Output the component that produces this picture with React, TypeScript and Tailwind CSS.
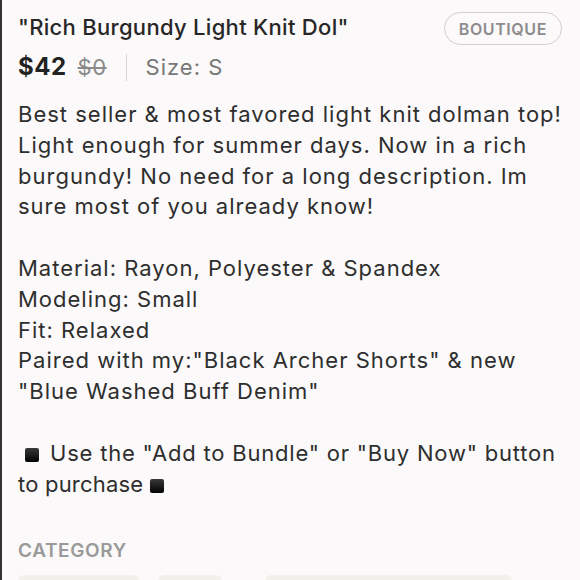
import React from 'react';

const font = { fontFamily: 'Inter, "Noto Sans", sans-serif' };

const Square = ({ className = '' }: { className?: string }) => (
  <span className={`inline-block w-[14px] h-[14px] rounded-[2px] bg-gradient-to-b from-[#3a3a3a] to-[#050505] align-[-1px] ${className}`} />
);

const App = () => {
  const intro = [
    'Best seller & most favored light knit dolman top!',
    'Light enough for summer days. Now in a rich',
    'burgundy! No need for a long description. Im',
    'sure most of you already know!',
  ];
  const details = [
    'Material: Rayon, Polyester & Spandex',
    'Modeling: Small',
    'Fit: Relaxed',
    'Paired with my:"Black Archer Shorts" & new',
    '"Blue Washed Buff Denim"',
  ];

  return (
    <div className="w-[580px] h-[580px] overflow-hidden bg-[#fbf9f9] border-l-2 border-[#333] text-[#2b2b2b]" style={font}>
      <div className="pl-[16px] pr-[18px] pt-[11px]">
        {/* Title row */}
        <div className="flex items-start justify-between">
          <h1 className="text-[22px] leading-[32px] font-medium tracking-[0.3px] text-[#272727]">"Rich Burgundy Light Knit Dol"</h1>
          <span className="mt-[1px] h-[33px] px-[14px] flex items-center rounded-full border border-[#cfcfcf] text-[16px] font-semibold tracking-[0.6px] text-[#8c8c8c]">
            BOUTIQUE
          </span>
        </div>

        {/* Price row */}
        <div className="flex items-center mt-[7px] h-[30px]">
          <span className="text-[24px] font-bold tracking-[0.5px] text-[#222]">$42</span>
          <span className="ml-[11px] text-[22px] tracking-[0.5px] text-[#8a8a8a] line-through">$0</span>
          <span className="mx-[19px] w-px h-[27px] bg-[#d5d5d5]" />
          <span className="text-[22px] tracking-[1px] text-[#777]">Size: S</span>
        </div>

        {/* Description */}
        <div className="mt-[17px] text-[22px] leading-[30.8px] tracking-[1px] text-[#2e2e2e] whitespace-nowrap">
          <p>
            {intro.map((d) => (
              <span key={d} className="block">{d}</span>
            ))}
          </p>
          <p className="mt-[30.8px]">
            {details.map((d) => (
              <span key={d} className="block">{d}</span>
            ))}
          </p>
          <p className="mt-[30.8px]">
            <span className="block tracking-[0.8px]">
              <Square className="ml-[7px] mr-[4px]" /> Use the "Add to Bundle" or "Buy Now" button
            </span>
            <span className="block tracking-[0.2px]">
              to purchase <Square />
            </span>
          </p>
        </div>

        {/* Category */}
        <h2 className="mt-[38px] text-[19px] font-semibold text-[#9a9a9a] tracking-[0.6px]">CATEGORY</h2>
        <div className="flex gap-[19px] mt-[9px]">
          <div className="w-[121px] h-[40px] rounded-[6px] bg-[#f3f0ec]" />
          <div className="w-[64px] h-[40px] rounded-[6px] bg-[#f3f0ec] mr-[24px]" />
          <div className="w-[247px] h-[40px] rounded-[6px] bg-[#f3f0ec]" />
        </div>
      </div>
    </div>
  );
};

export default App;
